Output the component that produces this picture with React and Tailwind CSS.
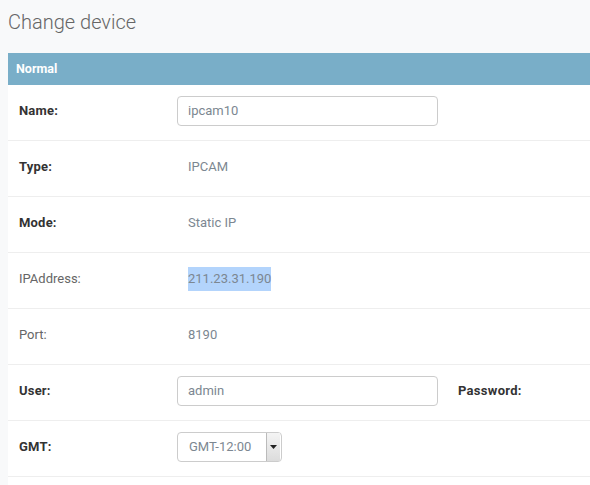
import React from "react";

const font = { fontFamily: "Roboto, 'Liberation Sans', Arial, sans-serif" };

const Row = ({ label, bold, children }) => (
  <div className="flex items-center h-[56px] pb-[3px] border-b border-[#eeeeee]">
    <div
      className={
        "w-[158px] ml-[11px] shrink-0 text-[13px] " +
        (bold ? "font-bold text-[#333333] tracking-[0.2px]" : "text-[#666666]")
      }
    >
      {label}
    </div>
    <div className="flex items-center">{children}</div>
  </div>
);

const Static = ({ children }) => (
  <span className="pl-[11px] text-[13px] text-[#7c8791]">{children}</span>
);

const TextInput = ({ value }) => (
  <div className="w-[261px] h-[30px] border border-[#cccccc] rounded-[4px] bg-white flex items-center px-[10px] text-[13px] text-[#7c8791]">
    {value}
  </div>
);

export default function App() {
  return (
    <div className="w-[590px] h-[485px] bg-[#f8f9fa] overflow-hidden" style={font}>
      <h1 className="pl-[8px] pt-[9px] h-[53px] text-[20px] font-light text-[#666666] leading-[26px]">
        Change device
      </h1>
      <div className="ml-[8px] bg-white">
        <div className="h-[32px] bg-[#79aec8] flex items-center pl-[8px] text-[12.5px] font-bold text-white">
          Normal
        </div>
        <Row label="Name:" bold>
          <TextInput value="ipcam10" />
        </Row>
        <Row label="Type:" bold>
          <Static>IPCAM</Static>
        </Row>
        <Row label="Mode:" bold>
          <Static>Static IP</Static>
        </Row>
        <Row label="IPAddress:">
          <span className="ml-[11px] py-[2px] text-[13px] text-[#7c8791] bg-[#b3d4fc]">211.23.31.190</span>
        </Row>
        <Row label="Port:">
          <Static>8190</Static>
        </Row>
        <Row label="User:" bold>
          <TextInput value="admin" />
          <span className="ml-[20px] text-[13px] font-bold text-[#333333] tracking-[0.3px]">Password:</span>
        </Row>
        <Row label="GMT:" bold>
          <div className="w-[105px] h-[30px] border border-[#cccccc] rounded-[4px] bg-white flex items-center text-[13px] text-[#7c8791]">
            <span className="pl-[11px] flex-1">GMT-12:00</span>
            <div className="w-[14px] h-[28px] mr-[1px] border-l border-[#bbbbbb] bg-gradient-to-b from-[#f4f4f4] to-[#dcdcdc] flex items-center justify-center">
              <svg width="7" height="4" viewBox="0 0 7 4">
                <path d="M0 0h7L3.5 4z" fill="#222" />
              </svg>
            </div>
          </div>
        </Row>
        <div className="h-[20px]" />
      </div>
    </div>
  );
}
